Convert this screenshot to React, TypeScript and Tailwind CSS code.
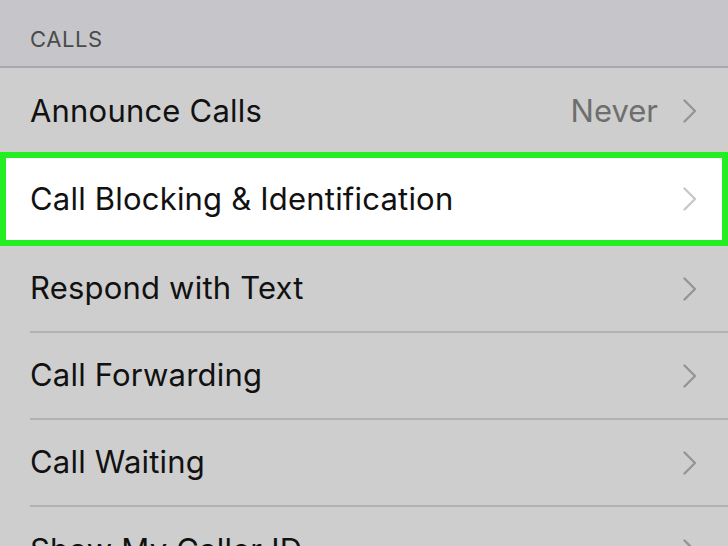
import React from "react";

function Chevron({ light }: { light?: boolean }) {
  return (
    <svg width="16" height="26" viewBox="0 0 16 26" className="shrink-0">
      <path
        d="M2.5 2.5 L13 13 L2.5 23.5"
        fill="none"
        stroke={light ? "#c7c7cc" : "#959595"}
        strokeWidth="2.4"
        strokeLinecap="round"
        strokeLinejoin="round"
      />
    </svg>
  );
}

function Row({ label, value, last }: { label: string; value?: string; last?: boolean }) {
  return (
    <div className="pl-[30px]">
      <div className={`flex h-[87px] items-center pr-[30px] ${last ? "" : "border-b-2 border-[#b2b2b6]"}`}>
        <span className="flex-1 text-[31px] tracking-[0.2px] text-[#111]">{label}</span>
        {value ? <span className="mr-[24px] text-[31px] text-[#6e6e6e]">{value}</span> : null}
        <Chevron />
      </div>
    </div>
  );
}

export default function App() {
  const rows = ["Respond with Text", "Call Forwarding", "Call Waiting"];

  return (
    <div className="h-[546px] w-[728px] overflow-hidden bg-[#cecece] font-['Inter','Liberation_Sans',Arial,sans-serif]">
      <div className="flex h-[68px] items-center border-b-2 border-[#a9a9ad] bg-[#c5c5ca] pl-[30px] pt-[12px]">
        <span className="text-[22px] tracking-[0.6px] text-[#4b4b4b]">CALLS</span>
      </div>
      <div className="pl-[30px]">
        <div className="flex h-[84px] items-center pr-[30px] pt-[2px]">
          <span className="flex-1 text-[31px] tracking-[0.2px] text-[#111]">Announce Calls</span>
          <span className="mr-[24px] text-[31px] text-[#6e6e6e]">Never</span>
          <Chevron />
        </div>
      </div>
      <div className="border-[6px] border-[#22ee22] bg-white">
        <div className="flex h-[82px] items-center pl-[24px] pr-[24px]">
          <span className="flex-1 text-[31px] tracking-[0.2px] text-[#111]">Call Blocking &amp; Identification</span>
          <Chevron light />
        </div>
      </div>
      {rows.map((r) => (
        <Row key={r} label={r} />
      ))}
      <Row label="Show My Caller ID" last />
    </div>
  );
}
